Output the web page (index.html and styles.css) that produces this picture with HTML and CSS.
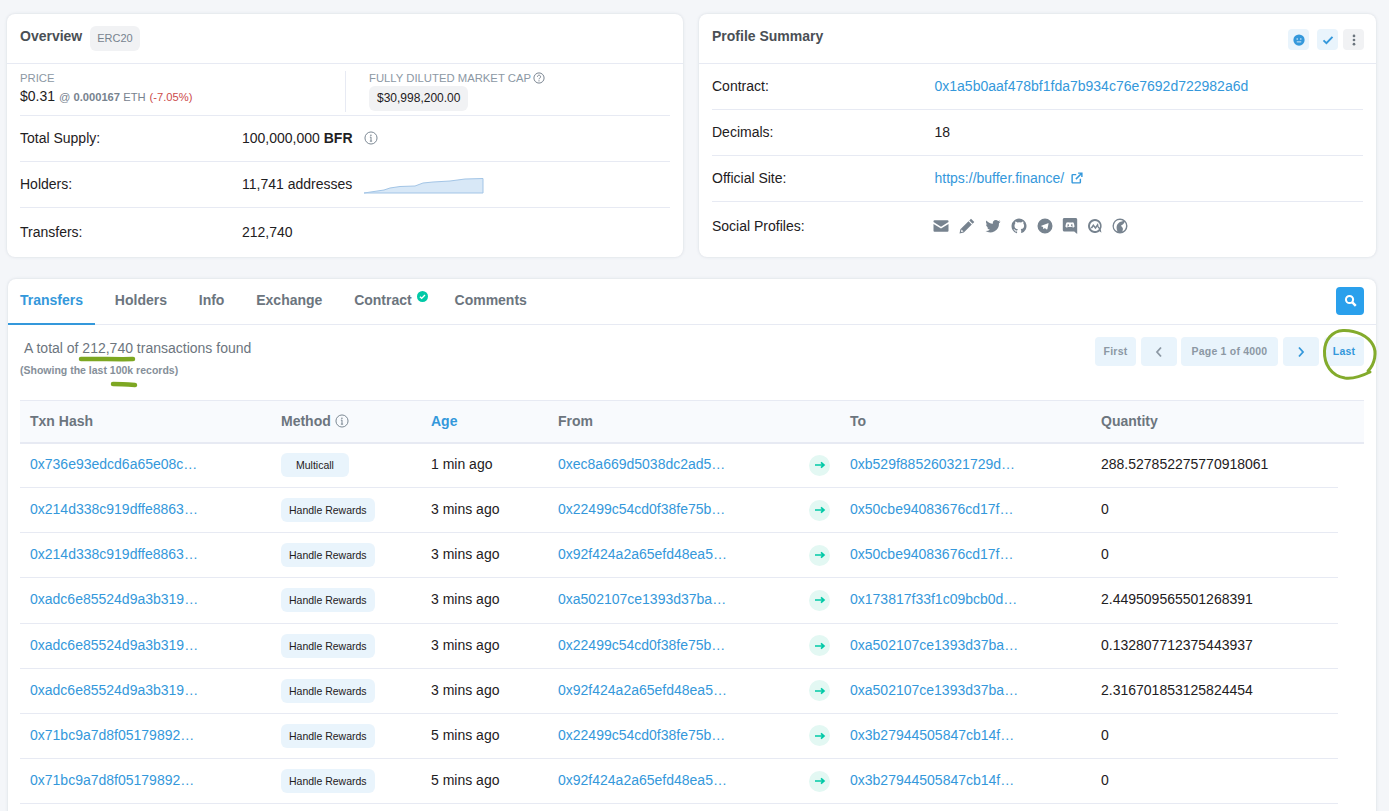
FILE: index.html
```html
<!DOCTYPE html>
<html lang="en">
<head>
<meta charset="utf-8">
<title>Buffer Finance token</title>
<link rel="stylesheet" href="styles.css">
</head>
<body>
<main class="page">
  <section class="top">
    <article class="card">
      <header class="card-head">
        <h2>Overview</h2><span class="tag">ERC20</span>
      </header>
      <div class="card-body">
        <div class="market">
          <div class="market-col">
            <div class="cap">PRICE</div>
            <div class="price">$0.31 <small>@ <b>0.000167</b> ETH</small> <small class="neg">(-7.05%)</small></div>
          </div>
          <div class="market-col second">
            <div class="cap">FULLY DILUTED MARKET CAP
              <svg class="ic q" viewBox="0 0 16 16"><circle cx="8" cy="8" r="6.8" fill="none" stroke="currentColor" stroke-width="1.3"/><path d="M5.9 6.3a2.1 2.1 0 1 1 3.2 1.8c-.7.4-1.1.8-1.1 1.6" fill="none" stroke="currentColor" stroke-width="1.3"/><circle cx="8" cy="11.8" r=".9" fill="currentColor"/></svg>
            </div>
            <span class="cap-val">$30,998,200.00</span>
          </div>
        </div>
        <div class="row"><span class="lbl">Total Supply:</span><span class="val"><span>100,000,000 <b>BFR</b></span><svg class="ic info" viewBox="0 0 16 16"><circle cx="8" cy="8" r="6.9" fill="none" stroke="currentColor" stroke-width="1.1"/><path d="M8 7v4.6M6.7 7h1.500M6.700 11.600h2.600" fill="none" stroke="currentColor" stroke-width="1.100"/><circle cx="7.900" cy="4.800" r=".9" fill="currentColor"/></svg></span></div>
        <div class="row"><span class="lbl">Holders:</span><span class="val"><span>11,741 addresses</span><svg class="spark" viewBox="0 0 120 18"><path d="M0 17L20 14L26 12L36 10.500L51 10L59 7L69 6L86 5L101 3L119 2.500V17Z" fill="#d8e8f7"/><path d="M0 17L20 14L26 12L36 10.500L51 10L59 7L69 6L86 5L101 3L119 2.500V17H0" fill="none" stroke="#a3c5e6" stroke-width="1"/></svg></span></div>
        <div class="row"><span class="lbl">Transfers:</span><span class="val">212,740</span></div>
      </div>
    </article>
    <article class="card profile">
      <header class="card-head split">
        <h2>Profile Summary</h2>
        <div class="head-tools">
          <span class="tool"><svg viewBox="0 0 16 16"><circle cx="8" cy="8" r="7.500" fill="#3498db"/><circle cx="5.600" cy="6.500" r="1" fill="#e5f2fb"/><circle cx="10.400" cy="6.500" r="1" fill="#e5f2fb"/><path d="M5 10.500h6" stroke="#e5f2fb" stroke-width="1.200"/></svg></span>
          <span class="tool"><svg viewBox="0 0 16 16"><path d="M2 8.500l3.900 3.700L14 3.800" fill="none" stroke="#3498db" stroke-width="2.600"/></svg></span>
          <span class="tool grey"><svg viewBox="0 0 16 16"><circle cx="8" cy="2.500" r="1.800" fill="#6c757e"/><circle cx="8" cy="8" r="1.800" fill="#6c757e"/><circle cx="8" cy="13.500" r="1.800" fill="#6c757e"/></svg></span>
        </div>
      </header>
      <div class="card-body">
        <div class="row"><span class="lbl">Contract:</span><a class="val link">0x1a5b0aaf478bf1fda7b934c76e7692d722982a6d</a></div>
        <div class="row"><span class="lbl">Decimals:</span><span class="val">18</span></div>
        <div class="row"><span class="lbl">Official Site:</span><span class="val"><a class="link">https://buffer.finance/</a><svg class="ic ext" viewBox="0 0 16 16"><path d="M12.500 9v4.500a1 1 0 0 1-1 1h-9a1 1 0 0 1-1-1v-9a1 1 0 0 1 1-1H7" fill="none" stroke="#3498db" stroke-width="1.900"/><path d="M6.500 9.500L14 2M9.500 1.500h5v5" fill="none" stroke="#3498db" stroke-width="1.900"/></svg></span></div>
        <div class="row"><span class="lbl">Social Profiles:</span>
          <span class="val socials">
            <svg viewBox="0 0 16 16"><path d="M.5 3.200a1 1 0 0 1 1-1h13a1 1 0 0 1 1 1v.9L8 8.700.5 4.100zM.5 6l7.500 4.600L15.500 6v6.800a1 1 0 0 1-1 1h-13a1 1 0 0 1-1-1z"/></svg>
            <svg viewBox="0 0 16 16"><path d="M12 .8l3.300 3.300-1.700 1.700-3.300-3.300zM9.500 3.300l3.300 3.300-8 8-4.300 1 .9-4.300zM2.500 11.500l-.5 2.500 2.500-.5z" fill-rule="evenodd"/></svg>
            <svg viewBox="0 0 16 16"><path d="M15.500 3.400c-.6.300-1.200.4-1.800.5.600-.4 1.100-1 1.400-1.700-.6.400-1.300.6-2 .8a3.100 3.100 0 0 0-5.300 2.800C5.200 5.700 2.900 4.500 1.400 2.600c-.8 1.400-.4 3.200 1 4.100-.5 0-1-.2-1.400-.4 0 1.500 1 2.800 2.500 3.100-.5.100-.9.100-1.400 0 .4 1.200 1.600 2.100 2.900 2.100A6.300 6.300 0 0 1 .5 13a8.800 8.800 0 0 0 13.500-7.800c.6-.5 1.100-1.100 1.500-1.800z"/></svg>
            <svg viewBox="0 0 16 16"><path fill-rule="evenodd" d="M8 .6a7.500 7.500 0 0 0-2.400 14.600c.4.100.5-.2.500-.4v-1.300c-2.100.5-2.500-1-2.500-1-.3-.9-.8-1.100-.8-1.100-.7-.5.100-.5.100-.5.800.1 1.200.8 1.200.8.700 1.200 1.800.8 2.300.6.100-.5.300-.8.500-1-1.700-.2-3.400-.8-3.400-3.700 0-.8.300-1.500.8-2-.1-.2-.3-1 .1-2 0 0 .6-.2 2 .8a7 7 0 0 1 3.800 0c1.400-1 2-.8 2-.8.400 1 .2 1.800.1 2 .5.500.8 1.200.8 2 0 2.900-1.800 3.500-3.400 3.700.3.200.5.700.5 1.400v2c0 .2.100.5.500.4A7.500 7.500 0 0 0 8 .6z"/></svg>
            <svg viewBox="0 0 16 16"><path fill-rule="evenodd" d="M8 .5a7.500 7.500 0 1 0 0 15 7.500 7.500 0 0 0 0-15zM11.700 4.900l-1.300 6.200c-.1.400-.4.500-.7.300L7.800 10l-.9.900c-.2.200-.3.200-.5 0l-.4-2-1.700-.6c-.4-.1-.4-.4.100-.6l6.600-2.500c.4-.1.700.1.700.7z"/></svg>
            <svg viewBox="0 0 16 16"><path fill-rule="evenodd" d="M2.300 0h11.400c.8 0 1.500.7 1.500 1.500V16l-3-2.600H2.300c-.8 0-1.500-.7-1.500-1.500V1.500C.8.700 1.500 0 2.300 0zM5.800 4.200c-.9.200-1.400.5-1.400.5-.5 1-.9 2.800-.9 4 .8.800 1.700.9 1.700.9l.5-.7c-.4-.1-.7-.3-1-.6 1.700 1 4.900 1 6.600 0-.3.300-.6.500-1 .6l.5.700s.9-.1 1.700-.9c0-1.200-.4-3-.9-4 0 0-.5-.3-1.400-.5l-.2.400a7 7 0 0 0-2.500 0zM6.200 6.200a.9.900 0 1 1 0 1.800.9.900 0 0 1 0-1.800zm3.600 0a.9.900 0 1 1 0 1.800.9.900 0 0 1 0-1.800z"/></svg>
            <svg viewBox="0 0 16 16"><path fill-rule="evenodd" d="M8 1a7 7 0 1 0 4.600 12.300l1.800 1.400-.6-3.400A7 7 0 0 0 8 1zm0 2a5 5 0 0 1 4.800 6.400c-.8.200-1.100-.5-1.300-1.300L11 5 8.400 8.700 6.300 6 3.400 10.200h1.900l1.100-1.600 2.100 2.700 1.900-2.800c.3 1 .8 2 1.800 2.200A5 5 0 1 1 8 3z"/></svg>
            <svg viewBox="0 0 16 16"><path fill-rule="evenodd" d="M8 .5a7.500 7.500 0 1 0 0 15 7.500 7.500 0 0 0 0-15zM8 2c1.200 0 2.300.4 3.200 1C9 3.300 6.500 4.500 5.300 6.500c-1 1.800-1 4.500.2 7A6 6 0 0 1 8 2zm4.600 2.100C13.500 5.200 14 6.500 14 8c0 2.600-1.600 4.800-3.900 5.600.7-1 1-2.200.7-3.300-.3-1.200-1.300-1.800-1.900-2.600 1.500-.4 3-1.900 3.700-3.600z"/></svg>
          </span>
        </div>
      </div>
    </article>
  </section>

  <section class="card main-card">
    <nav class="tabs">
      <a class="tab active">Transfers</a>
      <a class="tab">Holders</a>
      <a class="tab">Info</a>
      <a class="tab">Exchange</a>
      <a class="tab has-badge">Contract<svg class="verified" viewBox="0 0 16 16"><circle cx="8" cy="8" r="8" fill="#00c9a7"/><path d="M4.300 8.300l2.500 2.400 4.800-5" fill="none" stroke="#fff" stroke-width="2"/></svg></a>
      <a class="tab">Comments</a>
      <span class="search"><svg viewBox="0 0 16 16"><circle cx="6.800" cy="6.800" r="4.400" fill="none" stroke="#fff" stroke-width="2.500"/><path d="M10 10l4.500 4.500" stroke="#fff" stroke-width="3"/></svg></span>
    </nav>
    <div class="tab-body">
      <div class="summary">
        <div class="found">
          <p class="total">A total of 212,740 transactions found</p>
          <p class="showing">(Showing the last 100k records)</p>
        </div>
        <div class="pager">
          <span class="pg dim first">First</span>
          <span class="pg arrow dim"><svg viewBox="0 0 8 12"><path d="M6 1.500L2 6l4 4.500" fill="none" stroke="currentColor" stroke-width="1.800"/></svg></span>
          <span class="pg dim pages">Page 1 of 4000</span>
          <span class="pg arrow"><svg viewBox="0 0 8 12"><path d="M2 1.500L6 6l-4 4.500" fill="none" stroke="currentColor" stroke-width="1.800"/></svg></span>
          <span class="pg last">Last</span>
        </div>
      </div>
      <table class="txns">
        <colgroup>
          <col class="c-hash"><col class="c-method"><col class="c-age"><col class="c-from"><col class="c-arrow"><col class="c-to"><col class="c-qty"><col class="c-end">
        </colgroup>
        <thead>
          <tr>
            <th>Txn Hash</th>
            <th>Method <svg class="ic info-th" viewBox="0 0 16 16"><circle cx="8" cy="8" r="6.900" fill="none" stroke="currentColor" stroke-width="1.100"/><path d="M8 7v4.600M6.700 7h1.500M6.700 11.600h2.600" fill="none" stroke="currentColor" stroke-width="1.100"/><circle cx="7.900" cy="4.800" r=".9" fill="currentColor"/></svg></th>
            <th class="sorted">Age</th>
            <th>From</th>
            <th></th>
            <th>To</th>
            <th colspan="2">Quantity</th>
          </tr>
        </thead>
        <tbody>
          <tr><td><a class="link">0x736e93edcd6a65e08c…</a></td><td class="m"><span class="method wide">Multicall</span></td><td>1 min ago</td><td><a class="link">0xec8a669d5038dc2ad5…</a></td><td class="m"><span class="go"><svg viewBox="0 0 12 10"><path d="M1 5h8.500M7 2.300L10 5 7 7.700" fill="none" stroke="#00c9a7" stroke-width="1.700"/></svg></span></td><td><a class="link">0xb529f885260321729d…</a></td><td>288.527852275770918061</td><td class="end"></td></tr>
          <tr><td><a class="link">0x214d338c919dffe8863…</a></td><td class="m"><span class="method">Handle Rewards</span></td><td>3 mins ago</td><td><a class="link">0x22499c54cd0f38fe75b…</a></td><td class="m"><span class="go"><svg viewBox="0 0 12 10"><path d="M1 5h8.500M7 2.300L10 5 7 7.700" fill="none" stroke="#00c9a7" stroke-width="1.700"/></svg></span></td><td><a class="link">0x50cbe94083676cd17f…</a></td><td>0</td><td class="end"></td></tr>
          <tr><td><a class="link">0x214d338c919dffe8863…</a></td><td class="m"><span class="method">Handle Rewards</span></td><td>3 mins ago</td><td><a class="link">0x92f424a2a65efd48ea5…</a></td><td class="m"><span class="go"><svg viewBox="0 0 12 10"><path d="M1 5h8.500M7 2.300L10 5 7 7.700" fill="none" stroke="#00c9a7" stroke-width="1.700"/></svg></span></td><td><a class="link">0x50cbe94083676cd17f…</a></td><td>0</td><td class="end"></td></tr>
          <tr><td><a class="link">0xadc6e85524d9a3b319…</a></td><td class="m"><span class="method">Handle Rewards</span></td><td>3 mins ago</td><td><a class="link">0xa502107ce1393d37ba…</a></td><td class="m"><span class="go"><svg viewBox="0 0 12 10"><path d="M1 5h8.500M7 2.300L10 5 7 7.700" fill="none" stroke="#00c9a7" stroke-width="1.700"/></svg></span></td><td><a class="link">0x173817f33f1c09bcb0d…</a></td><td>2.449509565501268391</td><td class="end"></td></tr>
          <tr><td><a class="link">0xadc6e85524d9a3b319…</a></td><td class="m"><span class="method">Handle Rewards</span></td><td>3 mins ago</td><td><a class="link">0x22499c54cd0f38fe75b…</a></td><td class="m"><span class="go"><svg viewBox="0 0 12 10"><path d="M1 5h8.500M7 2.300L10 5 7 7.700" fill="none" stroke="#00c9a7" stroke-width="1.700"/></svg></span></td><td><a class="link">0xa502107ce1393d37ba…</a></td><td>0.132807712375443937</td><td class="end"></td></tr>
          <tr><td><a class="link">0xadc6e85524d9a3b319…</a></td><td class="m"><span class="method">Handle Rewards</span></td><td>3 mins ago</td><td><a class="link">0x92f424a2a65efd48ea5…</a></td><td class="m"><span class="go"><svg viewBox="0 0 12 10"><path d="M1 5h8.500M7 2.300L10 5 7 7.700" fill="none" stroke="#00c9a7" stroke-width="1.700"/></svg></span></td><td><a class="link">0xa502107ce1393d37ba…</a></td><td>2.316701853125824454</td><td class="end"></td></tr>
          <tr><td><a class="link">0x71bc9a7d8f05179892…</a></td><td class="m"><span class="method">Handle Rewards</span></td><td>5 mins ago</td><td><a class="link">0x22499c54cd0f38fe75b…</a></td><td class="m"><span class="go"><svg viewBox="0 0 12 10"><path d="M1 5h8.500M7 2.300L10 5 7 7.700" fill="none" stroke="#00c9a7" stroke-width="1.700"/></svg></span></td><td><a class="link">0x3b27944505847cb14f…</a></td><td>0</td><td class="end"></td></tr>
          <tr><td><a class="link">0x71bc9a7d8f05179892…</a></td><td class="m"><span class="method">Handle Rewards</span></td><td>5 mins ago</td><td><a class="link">0x92f424a2a65efd48ea5…</a></td><td class="m"><span class="go"><svg viewBox="0 0 12 10"><path d="M1 5h8.500M7 2.300L10 5 7 7.700" fill="none" stroke="#00c9a7" stroke-width="1.700"/></svg></span></td><td><a class="link">0x3b27944505847cb14f…</a></td><td>0</td><td class="end"></td></tr>
        </tbody>
      </table>
    </div>
  </section>
</main>
<svg class="scribble" viewBox="0 0 1389 811">
  <path d="M81 359C95 358.500 118 359.500 133 359" fill="none" stroke="#7da722" stroke-width="4.500" stroke-linecap="round"/>
  <path d="M113 384C120 384 128 384.500 135 385" fill="none" stroke="#7da722" stroke-width="4.500" stroke-linecap="round"/>
  <path d="M1368 371C1375 364 1377 352 1373 345C1368 336 1356 330 1343 330.500C1332 331 1325 340 1324.500 351C1324 364 1331 376 1345 378C1354 379 1362 376 1370 372" fill="none" stroke="#83ab2c" stroke-width="3" stroke-linecap="round"/>
</svg>
</body>
</html>
```
FILE: styles.css
```css
* { box-sizing: border-box; }
html, body { margin: 0; height: 811px; overflow: hidden; }
body { background: #f4f6f9; font-family: "Liberation Sans", Arial, sans-serif; font-size: 14px; color: #1e2022; position: relative; }
a { text-decoration: none; }
p, h2 { margin: 0; }
.page { padding: 14px 13px 0 7px; }
.top { display: grid; grid-template-columns: 676px 677px; gap: 16px; margin-bottom: 22px; }
.card { background: #fff; border-radius: 8px; box-shadow: 0 0 3px rgba(140,152,164,.3); }
.top .card { height: 243px; }
.card-head { height: 50px; padding: 14px 12px 0 13px; display: flex; align-items: flex-start; gap: 8px; border-bottom: 1px solid #e7eaf3; }
.card-head.split { justify-content: space-between; }
.card-head h2 { font-size: 14px; font-weight: 700; color: #4a4f55; line-height: 17px; }
.tag { background: #f1f2f4; color: #77838f; font-size: 11px; border-radius: 6px; padding: 0 7px; height: 25px; line-height: 25px; margin-top: -2px; }
.head-tools { display: flex; margin-top: 1px; }
.tool { width: 21px; height: 21px; background: #e9f4fc; border-radius: 4px; display: flex; align-items: center; justify-content: center; margin-left: 8px; }
.tool.grey { background: #f1f2f4; margin-left: 5px; }
.tool svg { width: 12px; height: 12px; }
.card-body { padding: 0 13px; }
.market { display: flex; height: 52px; border-bottom: 1px solid #e7eaf3; padding-top: 7px; }
.market-col { width: 326px; border-right: 1px solid #e7eaf3; height: 41px; }
.market-col.second { border: 0; padding-left: 23px; width: auto; }
.cap { font-size: 11.3px; color: #8c98a4; line-height: 14px; }
.price { font-size: 14px; line-height: 22px; color: #1e2022; }
.price small { font-size: 11.2px; color: #77838f; }
.price small.neg { color: #cc4b4b; }
.cap-val { display: inline-block; background: #f1f2f4; font-size: 12px; padding: 0 8px; height: 25px; line-height: 25px; border-radius: 6px; margin-top: 1px; }
.ic { vertical-align: -2px; }
.q { width: 12px; height: 12px; color: #77838f; margin-left: -1px; }
.row { display: flex; align-items: center; height: 46px; padding-bottom: 2px; border-bottom: 1px solid #e7eaf3; }
.card-body > .row:last-child { border-bottom: 0; height: 49px; }
.lbl { width: 222px; flex: none; }
.profile .lbl { width: 222.5px; }
.val { display: inline-flex; align-items: center; }
.link { color: #3498db; }
.info { width: 14px; height: 14px; margin-left: 11px; color: #77838f; }
.spark { width: 120px; height: 18px; margin: 3px 0 0 12px; }
.ext { width: 12px; height: 12px; margin-left: 7px; }
.socials { gap: 10px; margin-left: -1.5px; }
.socials svg { width: 16px; height: 16px; fill: #77838f; flex: none; }
.socials svg:nth-child(n+6) { margin-left: -1px; }
.main-card { height: 600px; margin-left: 1px; }
.tabs { display: flex; align-items: center; height: 46px; border-bottom: 1px solid #e7eaf3; padding-right: 12px; }
.tab { display: block; padding: 0 12px; margin-right: 7.8px; height: 46px; line-height: 43px; font-weight: 700; color: #6c757e; position: relative; }
.tab.has-badge { padding-right: 23px; }
.tab.active { color: #3498db; border-bottom: 2px solid #3498db; }
.verified { position: absolute; top: 12px; right: 7px; width: 11px; height: 11px; }
.search { margin: -2px 0 0 auto; width: 28px; height: 28px; background: #2aa0ec; border-radius: 4px; display: flex; align-items: center; justify-content: center; }
.search svg { width: 13px; height: 13px; }
.tab-body { padding: 0 12px; }
.summary { display: flex; justify-content: space-between; height: 75px; }
.total { font-size: 14px; color: #6c757e; padding: 15px 0 0 4px; line-height: 17px; }
.showing { font-size: 10.5px; color: #868f99; font-weight: 700; line-height: 13px; margin-top: 7px; }
.pager { display: flex; gap: 5px; padding-top: 12px; align-items: flex-start; }
.pg { height: 29px; line-height: 29px; background: #e9f4fc; border-radius: 4px; font-size: 10.5px; font-weight: 700; letter-spacing: .2px; color: #3498db; text-align: center; }
.pg.dim { color: #8c98a4; }
.first { width: 41px; }
.pages { width: 97px; margin-left: -1px; }
.last { width: 40px; }
.pg.arrow { width: 36px; display: flex; align-items: center; justify-content: center; }
.pg.arrow svg { width: 8px; height: 12px; }
.txns { width: 1344px; border-collapse: collapse; table-layout: fixed; }
.c-hash { width: 251px; }
.c-method { width: 150px; }
.c-age { width: 127px; }
.c-from { width: 246px; }
.c-arrow { width: 46px; }
.c-to { width: 251px; }
.c-qty { width: 247px; }
.c-end { width: 26px; }
.txns th { background: #f8fafd; height: 42px; text-align: left; font-size: 14px; font-weight: 700; color: #6c757e; padding: 0 10px; border-top: 1px solid #e7eaf3; border-bottom: 2px solid #e7eaf3; }
.txns th.sorted { color: #3498db; }
.info-th { width: 14px; height: 14px; color: #77838f; }
.txns td { height: 45.15px; padding: 0 10px 2px; border-bottom: 1px solid #e7eaf3; white-space: nowrap; font-size: 14px; }
.txns td.m { padding-bottom: 0; }
.txns td.end { border-bottom: 0; padding: 0; }
.go { width: 21px; height: 21px; border-radius: 50%; background: #e3f8f3; margin-left: 5px; display: flex; align-items: center; justify-content: center; }
.go svg { width: 12px; height: 10px; }
.method { display: inline-block; vertical-align: middle; background: #e9f4fc; color: #1e2022; font-size: 10.5px; height: 24px; line-height: 24px; border-radius: 6px; padding: 0 8px; text-align: center; }
.method.wide { min-width: 68px; }
.scribble { position: absolute; left: 0; top: 0; width: 1389px; height: 811px; pointer-events: none; }
```
